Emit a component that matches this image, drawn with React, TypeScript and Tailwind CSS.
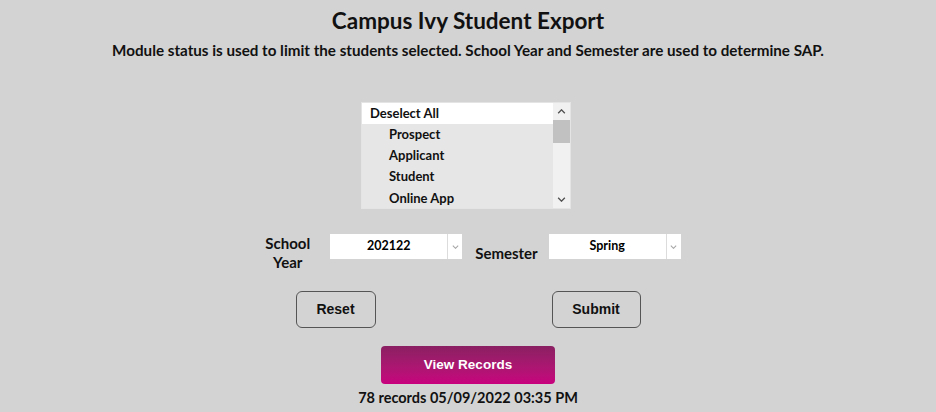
import { useState } from "react";

const statuses = ["Prospect", "Applicant", "Student", "Online App"];

function Chevron({ up, className }: { up?: boolean; className?: string }) {
  return (
    <svg viewBox="0 0 10 6" className={className} fill="none" stroke="currentColor" strokeWidth="1.6">
      {up ? <path d="M1 5 L5 1 L9 5" /> : <path d="M1 1 L5 5 L9 1" />}
    </svg>
  );
}

function Select({ value }: { value: string }) {
  return (
    <div className="flex h-[25px] w-[132px] bg-white">
      <div className="flex flex-1 items-center justify-center text-[12.5px] font-bold text-black">{value}</div>
      <div className="flex w-[15px] items-center justify-center border-l border-[#dcdcdc] text-[#a8a8a8]">
        <Chevron className="h-[4px] w-[7px]" />
      </div>
    </div>
  );
}

export default function App() {
  const [selected] = useState(statuses);

  return (
    <div className="flex min-h-[412px] w-full flex-col items-center bg-[#d3d3d3] font-['Lato',sans-serif] text-[#111]">
      <h1 className="mt-[7px] text-[22.5px] font-bold leading-[28px]">Campus Ivy Student Export</h1>
      <p className="mt-[6px] text-[15.2px] font-bold leading-[18px]">
        Module status is used to limit the students selected. School Year and Semester are used to determine SAP.
      </p>

      {/* LISTBOX */}
      <div className="mr-[4px] mt-[43px] flex h-[107px] w-[210px] border border-[#e4e4e4] bg-[#e6e6e6]">
        <div className="flex-1 overflow-hidden text-[13px] font-bold">
          <div className="flex h-[21px] items-center bg-white pl-[8px]">Deselect All</div>
          {selected.map((s) => (
            <div key={s} className="flex h-[21.3px] items-center pl-[27px]">
              {s}
            </div>
          ))}
        </div>
        <div className="flex w-[17px] flex-col bg-[#f1f1f1] text-[#505050]">
          <div className="flex h-[17px] items-center justify-center">
            <Chevron up className="h-[5px] w-[9px]" />
          </div>
          <div className="h-[23px] bg-[#c1c1c1]" />
          <div className="flex-1" />
          <div className="flex h-[17px] items-center justify-center">
            <Chevron className="h-[5px] w-[9px]" />
          </div>
        </div>
      </div>

      {/* SELECTS */}
      <div className="ml-[10px] mt-[25px] flex items-start">
        <div className="mr-[20px] text-center text-[15px] font-bold leading-[19px]">
          School
          <br />
          Year
        </div>
        <Select value="202122" />
        <div className="ml-[13px] mr-[11px] mt-[10px] text-[15px] font-bold leading-[19px]">Semester</div>
        <Select value="Spring" />
      </div>

      {/* BUTTONS */}
      <div className="mt-[19px] flex gap-[176px] font-['Liberation_Sans',sans-serif] text-[14px] font-bold">
        <button className="h-[37px] w-[80px] rounded-[6px] border border-[#555] bg-transparent">Reset</button>
        <button className="h-[37px] w-[89px] rounded-[6px] border border-[#555] bg-transparent">Submit</button>
      </div>

      <button className="mt-[18px] h-[38px] w-[174px] rounded-[4px] bg-gradient-to-b from-[#8a1f62] to-[#c8007e] font-['Liberation_Sans',sans-serif] text-[13.5px] font-bold text-white">
        View Records
      </button>
      <div className="mt-[5px] text-[14.5px] font-bold leading-[18px]">78 records 05/09/2022 03:35 PM</div>
    </div>
  );
}
